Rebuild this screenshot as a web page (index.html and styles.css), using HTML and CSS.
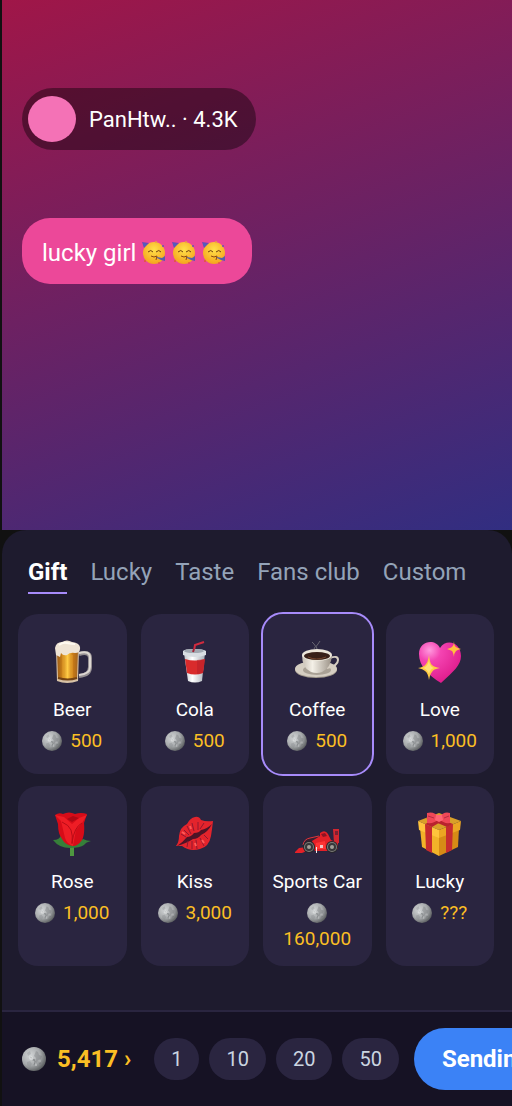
FILE: index.html
```
<!DOCTYPE html>
<html lang="en">
<head>
    <meta charset="UTF-8">
    <meta name="viewport" content="width=device-width, initial-scale=1.0">
    <title>Live Gifts</title>
    <link rel="stylesheet" href="styles.css">
</head>
<body>
    <!-- Shared icons -->
    <svg class="defs" width="0" height="0" aria-hidden="true">
        <defs>
            <radialGradient id="moonFill" cx="0.35" cy="0.35" r="0.75">
                <stop offset="0" stop-color="#d3d6d7"/>
                <stop offset="0.55" stop-color="#a6a9ab"/>
                <stop offset="1" stop-color="#4d5052"/>
            </radialGradient>
            <radialGradient id="faceFill" cx="0.5" cy="0.35" r="0.65">
                <stop offset="0" stop-color="#ffe14a"/>
                <stop offset="1" stop-color="#f5a51d"/>
            </radialGradient>
            <symbol id="moon" viewBox="0 0 24 24">
                <circle cx="12" cy="12" r="12" fill="url(#moonFill)"/>
                <path d="M14 4l2 1 1 3 3 1-1 3-3 1-1 3-2-1 1-4-2-2z" fill="#6d7072" opacity="0.35"/>
                <path d="M5 15l3-1 2 3-2 3-3-2zM5 6l3-2 1 3-3 2z" fill="#7f8284" opacity="0.3"/>
                <path d="M11 14l1-2 1 3-1 3M8 10l2 1M17 17l2-1" fill="none" stroke="#6d7072" stroke-width="1" opacity="0.6"/>
                <circle cx="9" cy="11" r="2" fill="#e9ebeb" opacity="0.5"/>
                <circle cx="14" cy="18" r="1" fill="#d4d6d6" opacity="0.6"/>
                <circle cx="18" cy="14" r="1" fill="#b9bcbd" opacity="0.6"/>
            </symbol>
            <symbol id="party" viewBox="0 0 24 24">
                <circle cx="12" cy="12" r="11" fill="url(#faceFill)"/>
                <path d="M0 1l7 1-5 5z" fill="#6b4bb4"/>
                <path d="M1 2l4 1-3 3z" fill="#4c62bd"/>
                <path d="M6 11q3-3 5 0M14 11q3-3 5 0" fill="none" stroke="#70400e" stroke-width="1"/>
                <path d="M9 15q3 2 6 0l-1 4" fill="none" stroke="#8a4a10" stroke-width="1"/>
                <path d="M15 16l5 1 3-2v5l-4-1-4-2z" fill="#5660a9"/>
                <circle cx="14" cy="1" r="1" fill="#e6a53c"/>
                <circle cx="21" cy="5" r="1" fill="#6c55ae"/>
                <circle cx="3" cy="20" r="1" fill="#df5d32"/>
                <circle cx="17" cy="22" r="1" fill="#e65d40"/>
            </symbol>
        </defs>
    </svg>

    <div class="phone">
        <div class="stage">
            <div class="host">
                <span class="avatar"></span>
                <span>PanHtw.. · 4.3K</span>
            </div>
            <div class="bubble">
                <span>lucky girl</span>
                <svg class="party"><use href="#party"/></svg>
                <svg class="party"><use href="#party"/></svg>
                <svg class="party"><use href="#party"/></svg>
            </div>
        </div>

        <div class="panel">
            <nav class="tabs">
                <a href="#" class="active">Gift</a>
                <a href="#">Lucky</a>
                <a href="#">Taste</a>
                <a href="#">Fans club</a>
                <a href="#">Custom</a>
            </nav>

            <div class="grid">
                <button type="button" class="gift">
                    <svg class="icon" viewBox="0 0 44 44">
                        <defs>
                            <linearGradient id="beerFill">
                                <stop offset="0" stop-color="#9a5a17"/>
                                <stop offset="0.25" stop-color="#c98018"/>
                                <stop offset="0.5" stop-color="#ffcb45"/>
                                <stop offset="0.75" stop-color="#c97b16"/>
                                <stop offset="1" stop-color="#a3641f"/>
                            </linearGradient>
                        </defs>
                        <path d="M29 14q11-3 11 4v9q0 8-11 9" fill="none" stroke="#958f92" stroke-width="4"/>
                        <path d="M29 13q11-3 11 5v9q0 7-11 8" fill="none" stroke="#ddd7d2" stroke-width="2"/>
                        <path d="M6 10h23l-1 31q-11 4-21 0z" fill="#d8c2a6"/>
                        <path d="M7 10h21l-1 28q-9 3-19 0z" fill="url(#beerFill)"/>
                        <path d="M13 15v23M22 15v23" stroke="#e9a632" stroke-width="1" opacity="0.7"/>
                        <path d="M8 38q10 3 19 0" fill="none" stroke="#744313" stroke-width="2"/>
                        <path d="M5 8q1-6 7-6 5-3 10 0 9 1 8 7 0 4-5 4-5-1-8 2-4 1-6-2l-1 4-4-2z" fill="#efe4d5"/>
                        <path d="M9 5q4-3 8-2t8 1" fill="none" stroke="#fffaf1" stroke-width="2"/>
                    </svg>
                    <span class="name">Beer</span>
                    <span class="price"><svg class="coin"><use href="#moon"/></svg><span>500</span></span>
                </button>

                <button type="button" class="gift">
                    <svg class="icon" viewBox="0 0 44 44">
                        <defs>
                            <linearGradient id="cupFill">
                                <stop offset="0" stop-color="#c0c4ca"/>
                                <stop offset="0.4" stop-color="#ffffff"/>
                                <stop offset="1" stop-color="#a9afb8"/>
                            </linearGradient>
                        </defs>
                        <path d="M21 11l1-6 9-3" fill="none" stroke="#d02b3e" stroke-width="2"/>
                        <path d="M11 13h21l-3 28q-7 3-14 0z" fill="url(#cupFill)"/>
                        <path d="M12 19q10 3 20 0l-2 14q-8 3-16 0z" fill="#d92b2c"/>
                        <path d="M24 20l8-1-2 14-6 1z" fill="#b41e28" opacity="0.5"/>
                        <path d="M10 11q1-2 11-2t12 2v4q-11 4-23 0z" fill="#d9dde2"/>
                        <ellipse cx="21" cy="11" rx="10" ry="2" fill="#a1a8b1"/>
                        <path d="M20 12l1-3" stroke="#a12336" stroke-width="2"/>
                    </svg>
                    <span class="name">Cola</span>
                    <span class="price"><svg class="coin"><use href="#moon"/></svg><span>500</span></span>
                </button>

                <button type="button" class="gift selected">
                    <svg class="icon" viewBox="0 0 44 44">
                        <defs>
                            <linearGradient id="mugFill">
                                <stop offset="0" stop-color="#c7bfb4"/>
                                <stop offset="0.35" stop-color="#f4f0e7"/>
                                <stop offset="1" stop-color="#9a9186"/>
                            </linearGradient>
                        </defs>
                        <path d="M19 9q3-3 0-5l-2-2M22 9q-2-3 1-5l2-3" fill="none" stroke="#77757d" stroke-width="1" opacity="0.8"/>
                        <ellipse cx="21" cy="30" rx="21" ry="8" fill="#9f978b"/>
                        <ellipse cx="21" cy="29" rx="21" ry="8" fill="#d5cec2"/>
                        <ellipse cx="22" cy="30" rx="14" ry="5" fill="#a9a195"/>
                        <path d="M35 18q8-3 8 2 0 6-11 8" fill="none" stroke="#d5cdc1" stroke-width="2"/>
                        <path d="M7 15q0 13 9 17 6 2 11 0 9-4 10-17z" fill="url(#mugFill)"/>
                        <ellipse cx="22" cy="15" rx="15" ry="6" fill="#ece6da"/>
                        <ellipse cx="22" cy="16" rx="13" ry="4" fill="#382019"/>
                        <path d="M13 17q8 4 18 0" fill="none" stroke="#75462e" stroke-width="1"/>
                    </svg>
                    <span class="name">Coffee</span>
                    <span class="price"><svg class="coin"><use href="#moon"/></svg><span>500</span></span>
                </button>

                <button type="button" class="gift">
                    <svg class="icon" viewBox="0 0 44 44">
                        <defs>
                            <radialGradient id="heartFill" cx="0.25" cy="0.2" r="0.9">
                                <stop offset="0" stop-color="#ff9ade"/>
                                <stop offset="0.3" stop-color="#f444b2"/>
                                <stop offset="1" stop-color="#dc1787"/>
                            </radialGradient>
                        </defs>
                        <path d="M22 8C28-2 43 2 43 16c0 9-7 15-20 27C10 35 1 26 1 14 1 1 17-2 22 8z" fill="url(#heartFill)"/>
                        <path d="M11 15q1 9 3 10 2 2 8 3-7 1-8 4-2 2-3 8-1-7-4-9-2-2-7-3 6-1 8-4 2-2 3-9z" fill="#ffcb42"/>
                        <path d="M36 1q0 5 2 6 1 1 5 2-4 1-5 2-2 2-2 6-1-5-2-6-2-1-5-2 4-1 5-2 2-2 2-6z" fill="#ffc13e"/>
                        <path d="M11 21q1 6 5 7-4 1-5 6-2-5-6-6 4-1 6-7z" fill="#ffe276"/>
                    </svg>
                    <span class="name">Love</span>
                    <span class="price"><svg class="coin"><use href="#moon"/></svg><span>1,000</span></span>
                </button>

                <button type="button" class="gift">
                    <svg class="icon" viewBox="0 0 44 44">
                        <path d="M20 31h4v13h-4z" fill="#4e9840"/>
                        <path d="M20 36Q9 36 3 28q7 0 8-5 4 7 13 10 5-4 9-6 4 2 8 2-5 1-7 4-4 3-14 3z" fill="#367f39"/>
                        <path d="M5 3q4-3 8-1 6-3 12 0 6-2 12 0l-3 9q1 12-2 17-4 6-9 6-8-1-11-7-4-5-4-15z" fill="#d60c18"/>
                        <path d="M5 3l9 2 8 7 7-6 8-3-5 8-6 7-3 16q-6-2-8-8L11 9z" fill="#ee1d25"/>
                        <path d="M22 10l-5-3 6-3 6 2z" fill="#b00814"/>
                        <path d="M12 10q7 3 9 8t1 14M32 11q-8 4-10 20" fill="none" stroke="#b80b16" stroke-width="1"/>
                    </svg>
                    <span class="name">Rose</span>
                    <span class="price"><svg class="coin"><use href="#moon"/></svg><span>1,000</span></span>
                </button>

                <button type="button" class="gift">
                    <svg class="icon" viewBox="0 0 44 44">
                        <path d="M3 34q3-4 3-10 1-9 8-12 3-6 8-7 4-1 6 3 5 2 12 1-1 9-2 15-2 11-11 13-10 3-18-3-3 0-6 0z" fill="#e3242c"/>
                        <path d="M4 34q6-4 10-9 4 0 7-4 5 0 7-3 6-1 11-6-4 8-11 11-3 4-8 4-6 4-16 7z" fill="#4d1427"/>
                        <path d="M11 18l5 5M14 14l4 8M19 11l2 8M25 10v8M31 11l-4 6M8 22l5 3M15 29l-1 6M19 29v8M23 28l1 9M27 26l4 8M31 23l4 4" stroke="#8f1830" stroke-width="1"/>
                        <path d="M9 20l3 2M17 14l1 3M22 31l1 3M29 28l2 3" stroke="#ff5a57" stroke-width="2"/>
                    </svg>
                    <span class="name">Kiss</span>
                    <span class="price"><svg class="coin"><use href="#moon"/></svg><span>3,000</span></span>
                </button>

                <button type="button" class="gift">
                    <svg class="icon" viewBox="0 0 44 44">
                        <path d="M8 34l4-8 12-2 2 6-5 8z" fill="#3a1f30"/>
                        <path d="M8 33q1-6 7-7l9-2" fill="none" stroke="#e0353c" stroke-width="1"/>
                        <path d="M38 17h6v14h-5z" fill="#d22630"/>
                        <path d="M40 19h3v4h-3z" fill="#7d2032"/>
                        <path d="M17 29l8-5v-3q5-4 8 1l3 6 7 3v6l-5 2H20z" fill="#e42128"/>
                        <path d="M26 22l4-1 2 3-4 1z" fill="#8d1424"/>
                        <path d="M0 40l4-4 8-1v4l-5 2H0z" fill="#e42128"/>
                        <path d="M21 31l9-2 1 8H20z" fill="#ff3434"/>
                        <path d="M25 33h3v3h-3z" fill="#f3c6c6"/>
                        <path d="M21 35h1v6h-1z" fill="#eee"/>
                        <circle cx="14" cy="35" r="6" fill="#26262b"/>
                        <circle cx="14" cy="35" r="5" fill="#7e7d79"/>
                        <circle cx="14" cy="35" r="4" fill="#37373a"/>
                        <circle cx="14" cy="35" r="2" fill="#a29f98"/>
                        <circle cx="37" cy="35" r="6" fill="#26262b"/>
                        <circle cx="37" cy="35" r="5" fill="#7e7d79"/>
                        <circle cx="37" cy="35" r="4" fill="#37373a"/>
                        <circle cx="37" cy="35" r="2" fill="#a29f98"/>
                    </svg>
                    <span class="name">Sports Car</span>
                    <span class="price"><svg class="coin"><use href="#moon"/></svg><span>160,000</span></span>
                </button>

                <button type="button" class="gift">
                    <svg class="icon" viewBox="0 0 44 44">
                        <path d="M2 16l19 8v20L4 35z" fill="#f2b329"/>
                        <path d="M21 24l20-8-1 19-19 9z" fill="#d68b16"/>
                        <path d="M0 9L21 1l22 8-22 9z" fill="#d9a029"/>
                        <path d="M0 9l21 9v8L1 18z" fill="#ffc43c"/>
                        <path d="M21 18l22-9-1 9-21 8z" fill="#eba522"/>
                        <path d="M7 12l7 3v26l-6-3zM28 15l7-3-1 26-6 3z" fill="#c72c2e"/>
                        <path d="M7 12l19-9 5 2-17 10zM13 3l22 9-6 3L8 6z" fill="#b9232e"/>
                        <path d="M21 5q-5-6-12-4v10q7 1 12-4 5 5 11 4V1q-6-2-11 4z" fill="#ef4857"/>
                        <path d="M18 3h6l1 5-4 2-4-2z" fill="#ff6573"/>
                        <path d="M10 4l6 2M31 4l-5 2" stroke="#b72b43" stroke-width="1"/>
                    </svg>
                    <span class="name">Lucky</span>
                    <span class="price"><svg class="coin"><use href="#moon"/></svg><span>???</span></span>
                </button>
            </div>

            <div class="footer">
                <a href="#" class="balance"><svg class="coin"><use href="#moon"/></svg><span>5,417 ›</span></a>
                <div class="amounts">
                    <button type="button">1</button>
                    <button type="button">10</button>
                    <button type="button">20</button>
                    <button type="button">50</button>
                </div>
                <button type="button" class="send">Sending</button>
            </div>
        </div>
    </div>
</body>
</html>
```
FILE: styles.css
```
* {
    box-sizing: border-box;
}

body {
    margin: 0;
    padding-left: 2px;
    background-color: #111;
    color: #fff;
    font-family: Roboto, sans-serif;
    overflow-x: hidden;
}

button {
    border: none;
    font-family: inherit;
    cursor: pointer;
}

a {
    color: inherit;
    text-decoration: none;
}

.defs {
    position: absolute;
}

.phone {
    display: flex;
    flex-direction: column;
    min-height: 100vh;
    overflow: hidden;
}

.stage {
    display: flex;
    flex-direction: column;
    align-items: flex-start;
    gap: 68px;
    min-height: 530px;
    padding: 88px 20px 20px;
    background: linear-gradient(160deg, #a01648, #312e81);
}

.host {
    display: flex;
    align-items: center;
    gap: 13px;
    height: 62px;
    padding: 0 18px 0 6px;
    border-radius: 31px;
    background-color: rgba(0, 0, 0, 0.4);
    font-size: 22px;
}

.avatar {
    width: 48px;
    height: 46px;
    border-radius: 50%;
    background-color: #f472b6;
}

.bubble {
    display: flex;
    align-items: center;
    gap: 6px;
    padding: 21px 26px 17px 20px;
    border-radius: 28px;
    background-color: #ec4899;
    font-size: 24px;
    line-height: 28px;
}

.party {
    width: 24px;
    height: 24px;
}

/* Gift panel */
.panel {
    display: flex;
    flex: 1;
    flex-direction: column;
    border-radius: 24px 24px 0 0;
    background-color: #1e1b2e;
}

.tabs {
    display: flex;
    gap: 23px;
    padding: 28px 26px 20px;
    font-size: 24px;
    line-height: 28px;
    color: #94a3b8;
    white-space: nowrap;
}

.tabs a {
    padding-bottom: 6px;
    border-bottom: 2px solid transparent;
}

.tabs .active {
    border-color: #a78bfa;
    color: #fff;
    font-weight: bold;
}

.grid {
    display: grid;
    grid-template-columns: repeat(4, 1fr);
    gap: 12px 14px;
    padding: 0 18px 44px 16px;
}

.gift {
    display: flex;
    flex-direction: column;
    align-items: center;
    padding: 26px 8px 17px;
    border-radius: 20px;
    background-color: #2a2540;
    color: #fff;
    font-size: 19px;
}

.selected {
    outline: 2px solid #a78bfa;
}

.icon {
    width: 44px;
    height: 44px;
    margin-bottom: 13px;
}

.name {
    line-height: 26px;
    margin-bottom: 2px;
    white-space: nowrap;
}

.price {
    display: flex;
    flex-wrap: wrap;
    align-items: center;
    justify-content: center;
    column-gap: 8px;
    color: #fbbf24;
    line-height: 20px;
}

.coin {
    width: 20px;
    height: 20px;
}

.price .coin {
    margin: 6px 0;
}

/* Bottom bar */
.footer {
    display: flex;
    flex: 1;
    align-items: flex-start;
    padding: 16px 20px;
    border-top: 2px solid #2a2540;
    background-color: #161224;
}

.balance {
    display: flex;
    flex-shrink: 0;
    align-items: center;
    gap: 11px;
    height: 62px;
    margin-right: 23px;
    color: #fbbf24;
    font-size: 24px;
    font-weight: bold;
}

.balance .coin {
    width: 24px;
    height: 24px;
}

.amounts {
    display: flex;
    flex-shrink: 0;
    align-items: center;
    gap: 10px;
    height: 62px;
    margin-right: 15px;
}

.amounts button {
    height: 42px;
    padding: 0 17px;
    border-radius: 21px;
    background-color: #2a2540;
    color: #cbd5e1;
    font-size: 20px;
}

.send {
    flex-shrink: 0;
    height: 62px;
    padding: 0 28px;
    border-radius: 31px;
    background-color: #3b82f6;
    color: #fff;
    font-size: 24px;
    font-weight: bold;
}
```
